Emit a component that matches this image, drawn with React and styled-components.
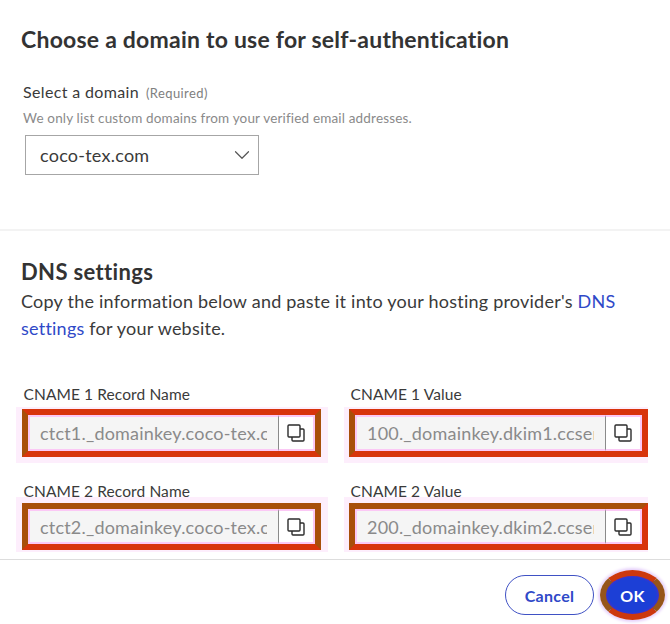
import React from 'react';
import styled, { createGlobalStyle } from 'styled-components';
import { ChevronDown } from 'lucide-react';

const RED = '#d8340c';
const BROWN = '#a84f0a';

const Global = createGlobalStyle`
  html, body { margin: 0; padding: 0; background: #fff; }
  body { font-family: "Lato", "Liberation Sans", sans-serif; color: #3a3a3a; }
  * { box-sizing: border-box; }
`;

const Page = styled.div`
  width: 670px;
  height: 624px;
  overflow: hidden;
`;

const TopSection = styled.section`
  height: 231px;
  padding: 24px 21px 0;
  border-bottom: 2px solid #f3f3f3;
`;

const Title = styled.h1`
  margin: 0;
  font-size: 23px;
  line-height: 30px;
  font-weight: 700;
  letter-spacing: 0.22px;
  color: #333;
`;

const SelectLabel = styled.div`
  margin: 26px 0 0 2px;
  display: flex;
  align-items: baseline;
  gap: 7px;
  font-size: 16px;
  line-height: 24px;
  letter-spacing: 0.35px;
`;

const Required = styled.span`
  font-size: 13px;
  letter-spacing: 0.4px;
  color: #808080;
`;

const Helper = styled.div`
  margin: 3px 0 0 2px;
  font-size: 13.5px;
  line-height: 20px;
  letter-spacing: 0.17px;
  color: #8a8a8a;
`;

const Select = styled.div`
  margin: 7px 0 0 4px;
  width: 234px;
  height: 40px;
  padding: 0 3px 1px 14px;
  display: flex;
  align-items: center;
  justify-content: space-between;
  border: 1.5px solid #a6a6a6;
  font-size: 18px;
  letter-spacing: 0.25px;
  color: #3a3a3a;
`;

const DnsSection = styled.section`
  height: 329px;
  padding: 27px 21px 0 22px;
  border-bottom: 1px solid #dddddd;
`;

const Heading = styled.h2`
  margin: 0 0 0 -1px;
  font-size: 22px;
  line-height: 28px;
  font-weight: 700;
  letter-spacing: 0.35px;
  color: #333;
`;

const Intro = styled.p`
  margin: 2px 0 0 -1px;
  font-size: 18px;
  line-height: 27px;
  letter-spacing: 0.23px;
  color: #3a3a3a;
`;

const DnsLink = styled.a`
  color: #2f49c8;
  text-decoration: none;
`;

const FieldGrid = styled.div`
  margin-top: 39px;
  display: grid;
  grid-template-columns: 299px 299px;
  column-gap: 28px;
  row-gap: 21px;
`;

const Field = styled.div`
  display: flex;
  flex-direction: column;
`;

const FieldLabel = styled.label`
  position: relative;
  z-index: 1;
  height: ${(p) => (p.$tight ? '25px' : '28px')};
  padding-left: 1.5px;
  line-height: 26px;
  font-size: 15.5px;
  letter-spacing: 0.1px;
  color: #3a3a3a;
`;

/* the pale glow round the annotation box, uneven on each side */
const Glow = styled.div`
  --t: ${(p) => (p.$tight ? '6px' : '2px')};
  --b: ${(p) => (p.$tight ? '2px' : '6px')};
  --l: ${(p) => (p.$left ? '6px' : '5px')};
  --r: ${(p) => (p.$left ? '7px' : '0px')};
  margin: calc(var(--t) * -1) calc(var(--r) * -1) calc(var(--b) * -1) calc(var(--l) * -1);
  padding: var(--t) var(--r) var(--b) var(--l);
  background: #fdeefc;
`;

const Highlight = styled.div`
  height: ${(p) => (p.$tight ? '47px' : '48px')};
  display: flex;
  border: 6px solid ${RED};
  border-left-color: ${BROWN};
  border-top-color: ${(p) => (p.$tight ? BROWN : RED)};
  border-right-color: ${(p) => (p.$left ? BROWN : RED)};
`;

const FieldValue = styled.div`
  flex: 1;
  min-width: 0;
  padding: 0 11px 0 10px;
  display: flex;
  align-items: center;
  background: #f5f5f5;
  border: 2px solid #fbc8f5;
  border-right: 1px solid #8a8a8a;
  font-size: 18px;
  letter-spacing: 0.2px;
  color: #8a8a8a;
`;

const ValueText = styled.span`
  overflow: hidden;
  white-space: nowrap;
`;

const CopyButton = styled.button`
  width: 36px;
  padding: 0;
  display: flex;
  align-items: center;
  justify-content: center;
  background: #fff;
  border: 2px solid #fbc8f5;
  border-left: 0;
`;

const Footer = styled.footer`
  height: 64px;
  padding: 10px 5px 0 0;
  display: flex;
  align-items: flex-start;
  justify-content: flex-end;
  gap: 6px;
`;

const Cancel = styled.button`
  margin-top: 5px;
  width: 89px;
  height: 40px;
  border: 1.5px solid #3f51c4;
  border-radius: 20px;
  background: #fff;
  font-family: inherit;
  font-size: 16px;
  font-weight: 700;
  letter-spacing: 0.3px;
  color: #2f49c8;
`;

const Ok = styled.button`
  width: 65px;
  height: 50px;
  border: 6px solid;
  border-color: #cc380e #96551a #cc380e #96551a;
  border-radius: 50%;
  background: radial-gradient(ellipse at center, #1c3fd6 62%, #5a25cc 80%);
  box-shadow: 0 0 3px 2px #e6d0fb;
  font-family: inherit;
  font-size: 16px;
  font-weight: 700;
  letter-spacing: 0.3px;
  color: #fff;
`;

const CopyIcon = () => (
  <svg width="18" height="18" viewBox="0 0 18 18" fill="none" stroke="#2b2b2b" strokeWidth="1.4">
    <rect x="1" y="1" width="12" height="12" rx="1" />
    <path d="M13 5h3a1 1 0 0 1 1 1v10a1 1 0 0 1-1 1H6a1 1 0 0 1-1-1v-3" />
  </svg>
);

const records = [
  { label: 'CNAME 1 Record Name', value: 'ctct1._domainkey.coco-tex.com', left: true },
  { label: 'CNAME 1 Value', value: '100._domainkey.dkim1.ccsend.com' },
  { label: 'CNAME 2 Record Name', value: 'ctct2._domainkey.coco-tex.com', left: true, tight: true },
  { label: 'CNAME 2 Value', value: '200._domainkey.dkim2.ccsend.com', tight: true },
];

export default function App() {
  return (
    <Page>
      <Global />
      <TopSection>
        <Title>Choose a domain to use for self-authentication</Title>
        <SelectLabel>
          Select a domain <Required>(Required)</Required>
        </SelectLabel>
        <Helper>We only list custom domains from your verified email addresses.</Helper>
        <Select>
          coco-tex.com
          <ChevronDown size={26} strokeWidth={1.1} color="#555" />
        </Select>
      </TopSection>
      <DnsSection>
        <Heading>DNS settings</Heading>
        <Intro>
          Copy the information below and paste it into your hosting provider's{' '}
          <DnsLink href="#">DNS settings</DnsLink> for your website.
        </Intro>
        <FieldGrid>
          {records.map((r) => (
            <Field key={r.label}>
              <FieldLabel $tight={r.tight}>{r.label}</FieldLabel>
              <Glow $tight={r.tight} $left={r.left}>
                <Highlight $tight={r.tight} $left={r.left}>
                  <FieldValue>
                    <ValueText>{r.value}</ValueText>
                  </FieldValue>
                  <CopyButton>
                    <CopyIcon />
                  </CopyButton>
                </Highlight>
              </Glow>
            </Field>
          ))}
        </FieldGrid>
      </DnsSection>
      <Footer>
        <Cancel>Cancel</Cancel>
        <Ok>OK</Ok>
      </Footer>
    </Page>
  );
}
